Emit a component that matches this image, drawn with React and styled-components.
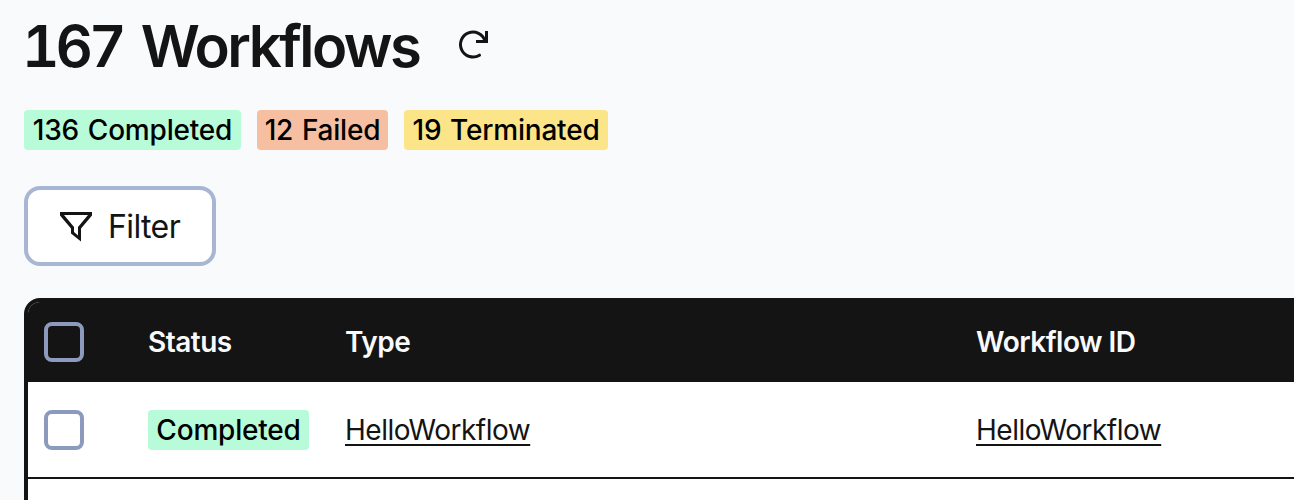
import React from 'react';
import styled, { createGlobalStyle } from 'styled-components';

const GlobalStyle = createGlobalStyle`
  * { box-sizing: border-box; }
  body { margin: 0; background: #f8fafc; color: #141414; font-family: Inter, sans-serif; overflow: hidden; }
`;
const Page = styled.main`
  width: 1294px; height: 500px; overflow: hidden; padding: 18px 0 0 24px;
`;
const Header = styled.header`
  display: flex; align-items: center; height: 56px;
`;
const Title = styled.h1`
  width: 434px; margin: 0 0 0 -2px; font-size: 58px; line-height: 56px; font-weight: 580; letter-spacing: -2.5px; white-space: nowrap;
`;
const Total = styled.span`
  font-variant-numeric: tabular-nums; letter-spacing: -4px; margin-right: 6px;
`;
const RefreshIcon = styled.svg`
  display: block; margin-bottom: 2px;
`;
const Counts = styled.div`
  display: flex; gap: 16px; margin-top: 36px;
`;
const colors = { completed: '#b7fbd8', failed: '#f6bfa2', terminated: '#fce588' };
const Badge = styled.span`
  display: inline-flex; align-items: center; justify-content: center;
  width: ${p => p.$w}px; height: 40px; border-radius: 4px; color: #000;
  background: ${p => colors[p.$status]};
  font-size: 28px; font-weight: 550; letter-spacing: -0.2px; word-spacing: 1.5px; white-space: nowrap;
`;
const FilterButton = styled.button`
  display: flex; align-items: center; gap: 16px; width: 192px; height: 80px; margin-top: 36px;
  padding: 0 0 0 32px; border: 4px solid #a7b6d3; border-radius: 16px; background: #fff;
  color: #141414; font: 400 32px Inter, sans-serif; letter-spacing: -0.6px;
`;
const Table = styled.section`
  width: 1400px; height: 300px; margin-top: 32px; border: 4px solid #141414; border-radius: 16px 0 0 0;
  background: #fff; overflow: hidden;
`;
const Row = styled.div`
  display: grid; grid-template-columns: 104px 197px 631px 1fr; align-items: center;
  height: 97px; padding: 1px 0 0 16px; border-bottom: 2px solid #141414; font-size: 28px;
`;
const HeadRow = styled(Row)`
  height: 80px; padding-top: 0; background: #141414; color: #f8fafc; font-weight: 600; letter-spacing: -0.5px; border: 0;
`;
const Checkbox = styled.span`
  display: block; width: 40px; height: 40px; border: 4px solid #8c9bbd; border-radius: 8px;
`;
const Link = styled.a`
  color: #141414; text-decoration: underline; text-decoration-thickness: 2px; text-underline-offset: 4px;
  letter-spacing: -0.5px;
`;

export default function App() {
  return (
    <Page>
      <GlobalStyle />
      <Header>
        <Title><Total>167</Total> Workflows</Title>
        <RefreshIcon width="36" height="32" viewBox="456 29 36 32" fill="none" stroke="#141414" strokeWidth="3">
          <path d="M479.5 55.2A12.5 12.5 0 1 1 485 41" strokeLinecap="round" />
          <path d="M486.5 31V41.5H476" />
        </RefreshIcon>
      </Header>
      <Counts>
        <Badge $status="completed" $w={217}>136 Completed</Badge>
        <Badge $status="failed" $w={131}>12 Failed</Badge>
        <Badge $status="terminated" $w={204}>19 Terminated</Badge>
      </Counts>
      <FilterButton>
        <svg width="32" height="32" viewBox="60 210 32 32" fill="#141414" fillRule="evenodd">
          <path d="M60 212H92V215.5L81 228.5V241.5L71 233.5V228.5L60 215.5ZM64 215L74 227V232L78 235.5V227L88 215Z" />
        </svg>
        Filter
      </FilterButton>
      <Table>
        <HeadRow><Checkbox /><span>Status</span><span>Type</span><span>Workflow ID</span></HeadRow>
        <Row><Checkbox /><Badge $status="completed" $w={161}>Completed</Badge><Link>HelloWorkflow</Link><Link>HelloWorkflow</Link></Row>
      </Table>
    </Page>
  );
}
